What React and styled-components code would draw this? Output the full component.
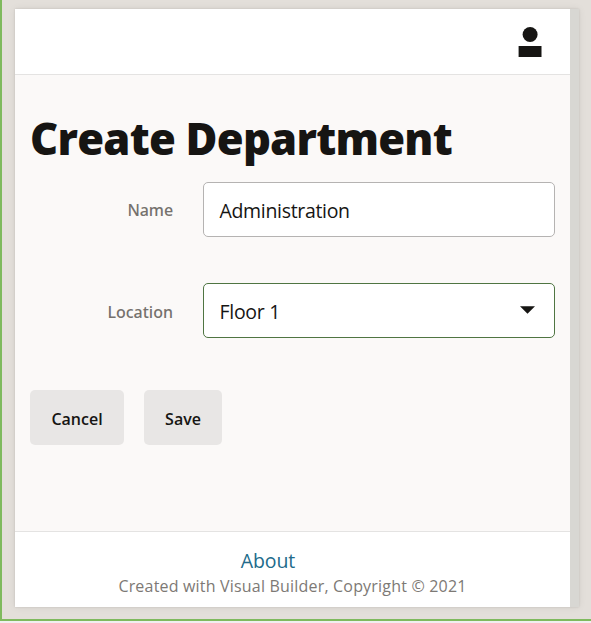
import React from "react";
import styled, { createGlobalStyle } from "styled-components";

const GlobalStyle = createGlobalStyle`
  * { box-sizing: border-box; }
  body { margin: 0; overflow: hidden; background: #f0eff0; font-family: "Open Sans", "Noto Sans", sans-serif; color: #161513; }
`;

const Canvas = styled.div`
  width: 591px;
  height: 621px;
  padding: 9px 12px 12px 13px;
  background: #e3dfda;
  border-left: 2px solid #7fba5e;
  border-bottom: 2px solid #7fba5e;
  box-shadow: 0 1px 0 #c5c3c8;
`;

const Device = styled.div`
  display: flex;
  width: 564px;
  height: 598px;
  background: #d8d7d3;
  box-shadow: 0 0 8px rgba(0, 0, 0, 0.07), 0 0 2px rgba(0, 0, 0, 0.12);
`;

const Page = styled.div`
  display: flex;
  flex-direction: column;
  width: 555px;
  background: #fbf9f8;
`;

const Header = styled.header`
  display: flex;
  justify-content: flex-end;
  height: 66px;
  padding: 18px 28px 0 0;
  background: #fff;
  border-bottom: 1px solid #e4e3e2;
`;

const Main = styled.main`
  flex: 1;
  padding: 33px 15px 0;
`;

const Title = styled.h1`
  margin: 0;
  height: 74px;
  font-size: 43.5px;
  line-height: 61px;
  font-weight: 800;
  letter-spacing: -0.75px;
  white-space: nowrap;
`;

const Form = styled.form`
  display: flex;
  flex-direction: column;
  gap: 46px;
`;

const Field = styled.div`
  display: grid;
  grid-template-columns: 143px 352px;
  column-gap: 30px;
  align-items: center;
  height: 55px;
`;

const Label = styled.label`
  padding-top: ${(p) => p.$drop || "0"};
  text-align: right;
  font-family: "Noto Sans", "Open Sans", sans-serif;
  font-size: 16px;
  line-height: 24px;
  font-weight: 500;
  letter-spacing: ${(p) => p.$spacing};
  color: #75716d;
`;

const Control = styled.div`
  display: flex;
  align-items: center;
  justify-content: space-between;
  height: 55px;
  padding: 1px 19px 0 15.5px;
  background: #fff;
  border: 1px solid ${(p) => (p.$active ? "#4f7542" : "#b5b3b2")};
  border-radius: 5px;
  font-size: 19.5px;
  letter-spacing: ${(p) => p.$spacing};
`;

const Arrow = styled.svg`
  margin-top: -3px;
`;

const Actions = styled.div`
  display: flex;
  gap: 20px;
  margin-top: 6px;
`;

const Button = styled.button`
  width: ${(p) => p.$width};
  height: 55px;
  padding: 3px 0 0;
  border: 0;
  border-radius: 5px;
  background: #e8e6e5;
  color: #161513;
  font: 600 16px "Open Sans", sans-serif;
`;

const Footer = styled.footer`
  height: 76px;
  padding-top: 15px;
  border-top: 1px solid #e4e3e2;
  background: #fff;
  text-align: center;
`;

const AboutLink = styled.a`
  display: block;
  margin-right: 49px;
  color: #226b8b;
  font-size: 19.5px;
  letter-spacing: -0.1px;
  line-height: 28px;
`;

const Copyright = styled.p`
  margin: 0;
  font-size: 16px;
  line-height: 23px;
  letter-spacing: 0.19px;
  color: #7d7975;
  white-space: nowrap;
`;

export default function App() {
  return (
    <>
      <GlobalStyle />
      <Canvas>
        <Device>
          <Page>
            <Header>
              <svg width="24" height="30" viewBox="0 0 24 30" fill="#161513" aria-label="User">
                <circle cx="12.1" cy="7.5" r="7.5" />
                <rect x="0.6" y="19" width="22.9" height="11" />
              </svg>
            </Header>
            <Main>
              <Title>Create Department</Title>
              <Form>
                <Field>
                  <Label $spacing="-0.1px">Name</Label>
                  <Control $spacing="-0.32px"><span>Administration</span></Control>
                </Field>
                <Field>
                  <Label $spacing="0px" $drop="2px">Location</Label>
                  <Control $active $spacing="-0.3px">
                    <span>Floor 1</span>
                    <Arrow width="15" height="8" viewBox="0 0 15 8" fill="#161513">
                      <path d="M0 0.3H15L7.5 7.8Z" />
                    </Arrow>
                  </Control>
                </Field>
                <Actions>
                  <Button type="button" $width="94px">Cancel</Button>
                  <Button type="button" $width="78px">Save</Button>
                </Actions>
              </Form>
            </Main>
            <Footer>
              <AboutLink>About</AboutLink>
              <Copyright>Created with Visual Builder, Copyright © 2021</Copyright>
            </Footer>
          </Page>
        </Device>
      </Canvas>
    </>
  );
}
